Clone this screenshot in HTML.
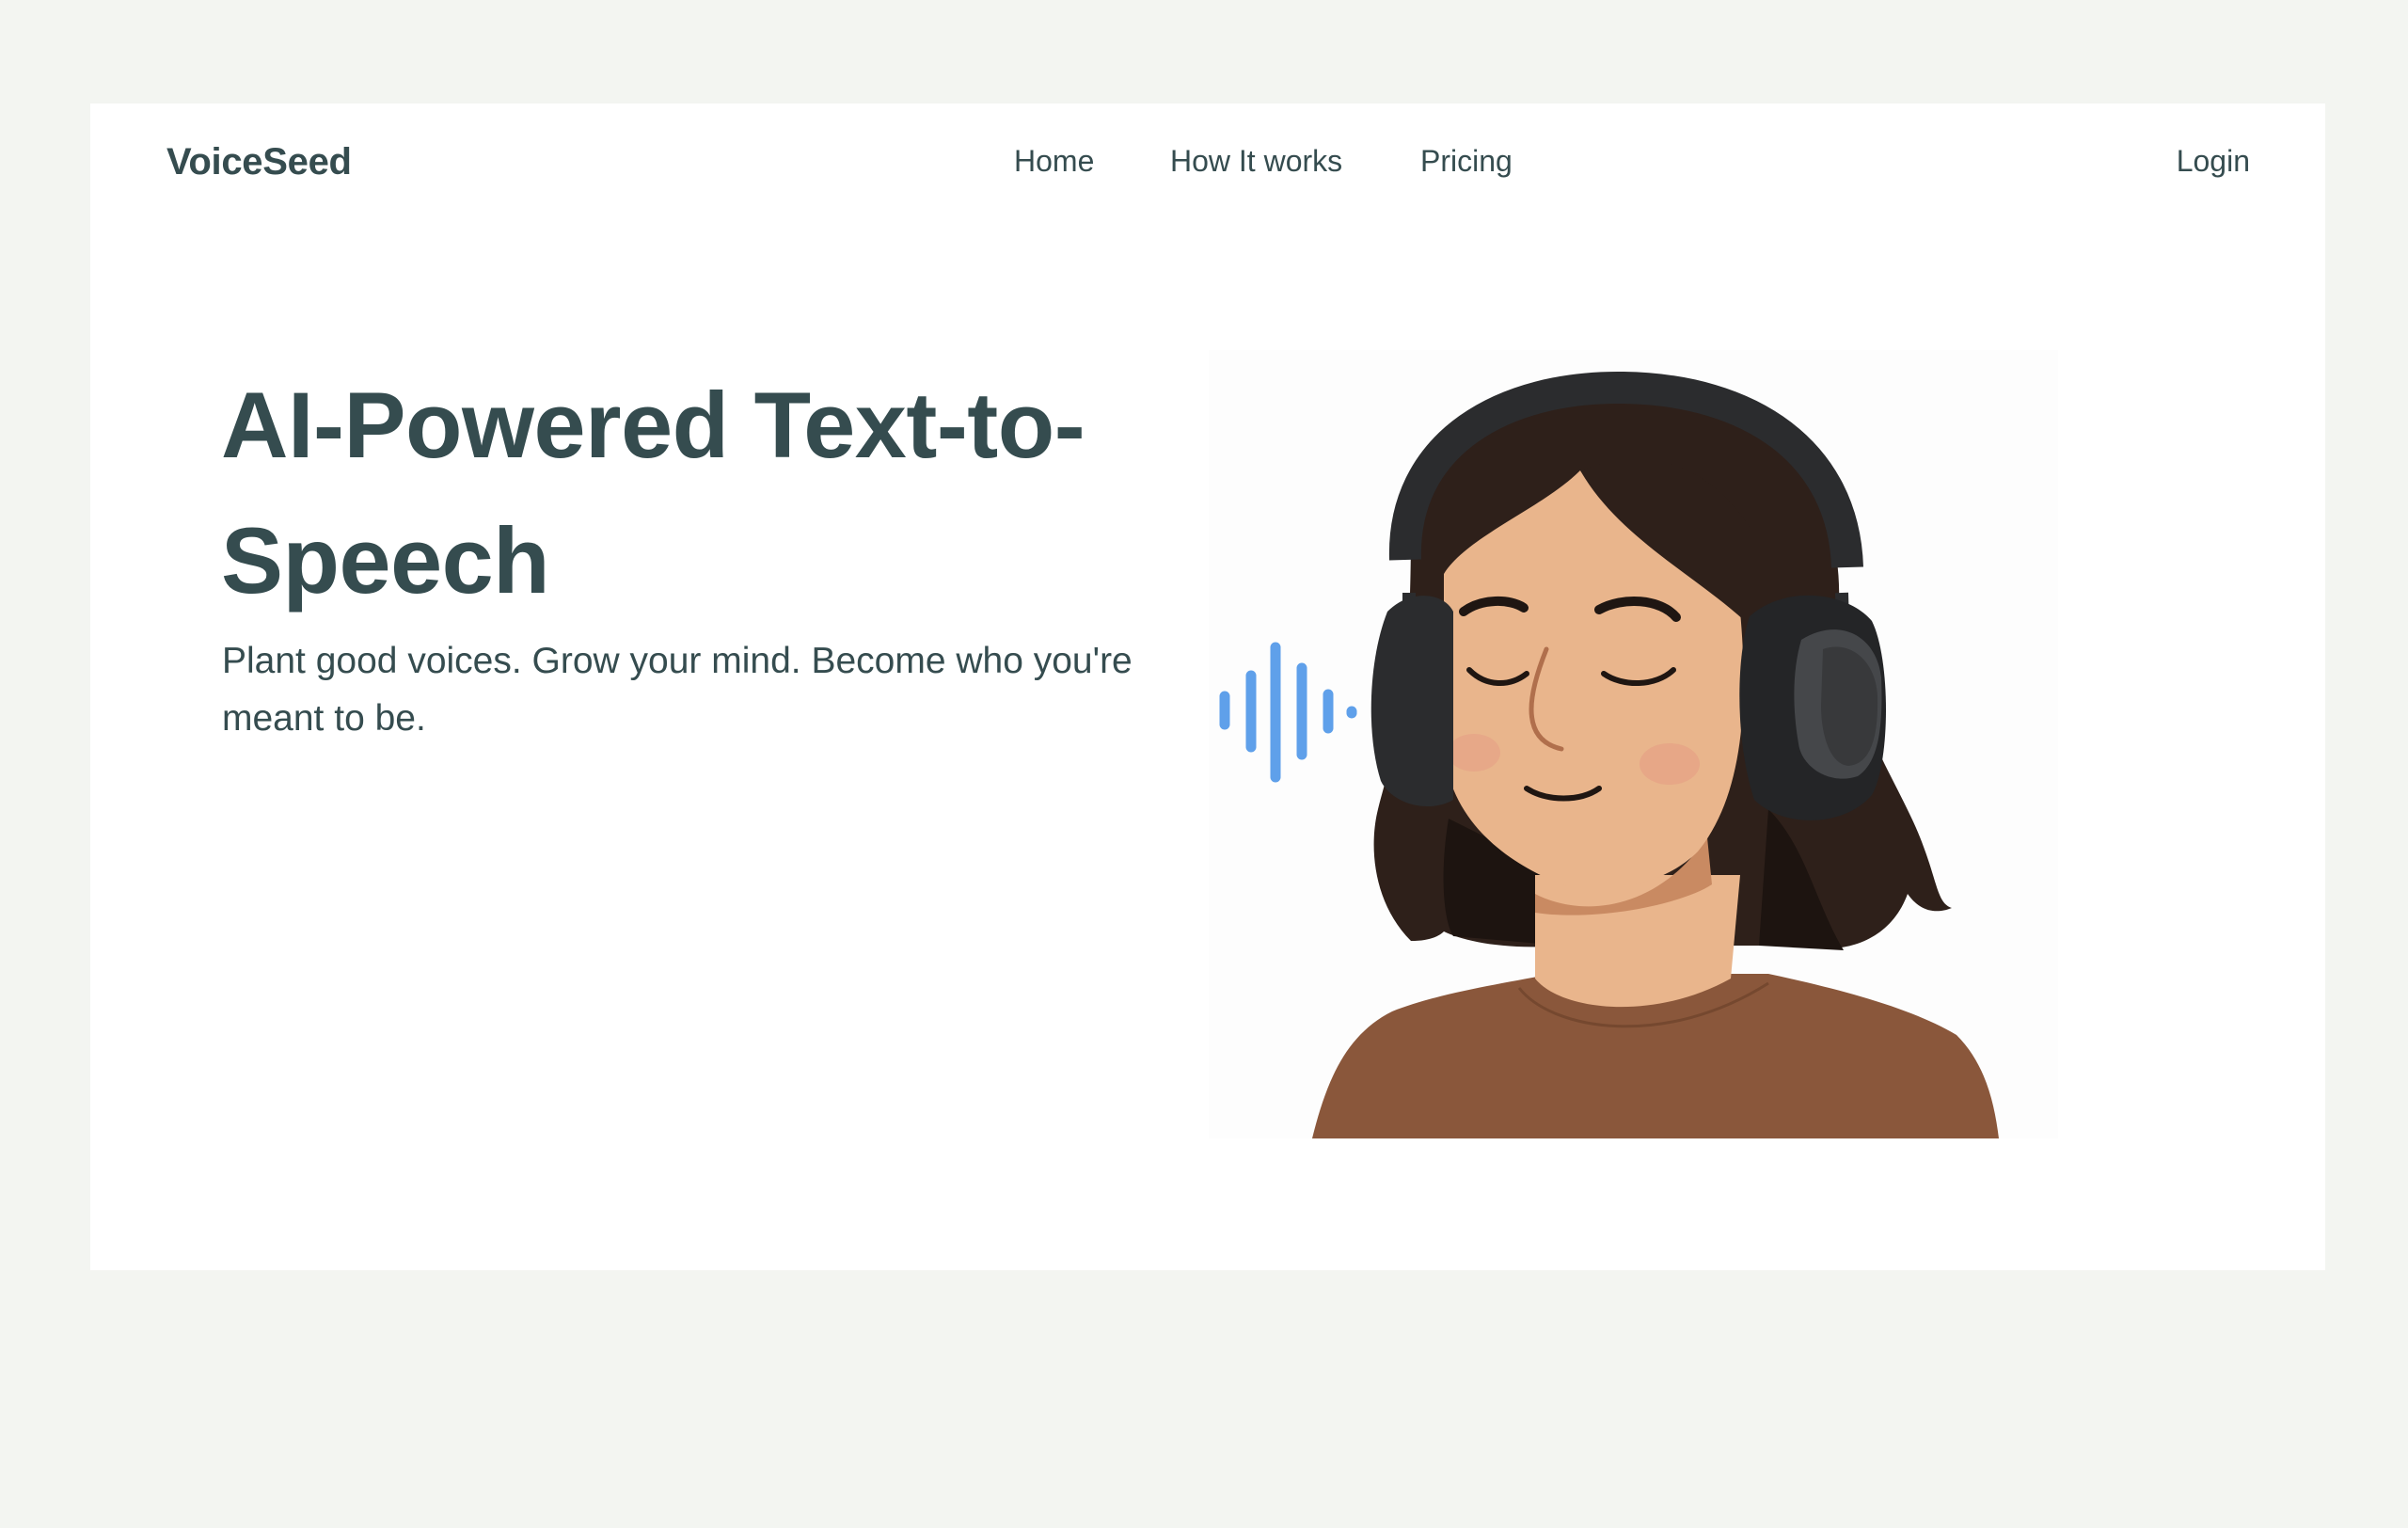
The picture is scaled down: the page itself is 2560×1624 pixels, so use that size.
<!DOCTYPE html>
<html><head><meta charset="utf-8"><style>
html,body{margin:0;padding:0;}
body{width:2560px;height:1624px;background:#f3f5f1;position:relative;overflow:hidden;font-family:"Liberation Sans",Arial,sans-serif;color:#354c4f;}
.card{position:absolute;left:96px;top:110px;width:2376px;height:1240px;background:#fff;}
.abs{position:absolute;white-space:nowrap;}
.logo{left:177px;top:148px;font-size:40px;line-height:48px;font-weight:bold;letter-spacing:-0.3px;}
.nav{top:151px;font-size:32px;line-height:40px;}
h1{position:absolute;left:235px;top:380px;margin:0;font-size:99px;line-height:144px;font-weight:bold;letter-spacing:-0.5px;}
.sub{left:236px;top:672px;font-size:39px;line-height:61px;}
</style></head><body>
<div class="card"></div>
<div class="abs logo">VoiceSeed</div>
<div class="abs nav" style="left:1078px">Home</div>
<div class="abs nav" style="left:1244px">How It works</div>
<div class="abs nav" style="left:1510px">Pricing</div>
<div class="abs nav" style="right:168px">Login</div>
<h1>AI-Powered Text-to-<br>Speech</h1>
<div class="abs sub">Plant good voices. Grow your mind. Become who you're<br>meant to be.</div>
<svg style="position:absolute;left:0;top:0" width="2560" height="1624" viewBox="0 0 2560 1624">
 <rect x="1285" y="372" width="903" height="838" fill="#fdfdfd"/>
 <g stroke="#5fa0ea" stroke-width="11" stroke-linecap="round">
  <line x1="1302" y1="740" x2="1302" y2="770"/>
  <line x1="1330" y1="718" x2="1330" y2="794"/>
  <line x1="1356" y1="688" x2="1356" y2="826"/>
  <line x1="1384" y1="710" x2="1384" y2="802"/>
  <line x1="1412" y1="738" x2="1412" y2="774"/>
  <line x1="1437" y1="756" x2="1437" y2="758"/>
 </g>
 <path d="M1500 560 C1500 460 1600 420 1725 425 C1860 430 1960 500 1955 640 C1960 760 2020 830 2045 900 C2060 940 2060 960 2075 965 C2050 975 2035 960 2028 950 C2010 1000 1960 1015 1920 1005 L1660 1005 C1600 1010 1555 1000 1535 990 C1530 995 1520 1000 1500 1000 C1460 960 1455 900 1465 860 C1480 800 1500 760 1500 560 Z" fill="#2e201a"/>
 <path d="M1540 870 C1530 930 1535 980 1545 995 L1660 1005 L1660 930 Z" fill="#1d1410"/>
 <path d="M1880 860 L1870 1005 L1960 1010 C1930 960 1920 900 1880 860 Z" fill="#1d1410"/>
 <path d="M1395 1210 C1410 1150 1430 1100 1480 1075 C1530 1055 1600 1045 1650 1035 L1880 1035 C1950 1050 2030 1070 2080 1100 C2110 1130 2120 1170 2125 1210 Z" fill="#8a573b"/>
 <path d="M1615 1050 C1650 1095 1770 1115 1880 1045" stroke="#75482f" stroke-width="3" fill="none"/>
 <path d="M1632 930 L1632 1040 C1660 1075 1760 1085 1840 1040 L1850 930 Z" fill="#e9b58c"/>
 <path d="M1632 950 C1680 975 1760 970 1815 890 L1820 940 C1790 960 1700 980 1632 970 Z" fill="#c98a62"/>
 <path d="M1535 610 C1560 570 1640 540 1680 500 C1720 560 1810 610 1850 650 C1860 760 1850 850 1805 905 C1765 945 1700 950 1660 940 C1610 920 1545 880 1535 800 Z" fill="#e9b58c"/>
 <path d="M1680 500 C1720 570 1800 610 1855 660 L1860 560 C1820 500 1760 470 1680 500 Z" fill="#2e201a"/>
 <ellipse cx="1567" cy="800" rx="28" ry="20" fill="#e59b83" opacity="0.5"/>
 <ellipse cx="1775" cy="812" rx="32" ry="22" fill="#e59b83" opacity="0.55"/>
 <g fill="none" stroke="#1f1612" stroke-linecap="round">
  <path d="M1556 650 C1575 636 1605 636 1620 646" stroke-width="10"/>
  <path d="M1700 648 C1725 634 1765 636 1782 656" stroke-width="10"/>
  <path d="M1562 712 C1580 730 1605 730 1623 716" stroke-width="6"/>
  <path d="M1705 716 C1725 730 1760 730 1779 712" stroke-width="6"/>
  <path d="M1623 838 C1645 852 1680 852 1700 838" stroke-width="6"/>
 </g>
 <path d="M1644 690 C1628 730 1612 785 1660 796" stroke="#b06f4c" stroke-width="5" fill="none" stroke-linecap="round"/>
 <path d="M1494 595 C1490 470 1600 410 1726 412 C1860 414 1960 480 1964 603" stroke="#2b2c2e" stroke-width="34" fill="none"/>
 <path d="M1498 630 L1498 700" stroke="#2b2c2e" stroke-width="14"/>
 <path d="M1958 630 L1960 700" stroke="#2b2c2e" stroke-width="14"/>
 <path d="M1475 650 C1500 625 1535 630 1545 650 L1545 850 C1520 865 1480 855 1468 830 C1452 780 1455 700 1475 650 Z" fill="#2b2c2e"/>
 <path d="M1860 655 C1900 620 1965 630 1990 660 C2010 700 2010 810 1990 845 C1960 880 1895 880 1865 850 C1845 790 1845 700 1860 655 Z" fill="#242527"/>
 <path d="M1915 680 C1955 655 1995 675 2000 720 C2002 770 1998 810 1975 825 C1945 835 1915 815 1912 790 C1905 750 1906 710 1915 680 Z" fill="#45474a"/>
 <path d="M1938 690 C1965 680 1994 700 1996 740 C1997 780 1990 812 1965 814 C1945 812 1936 780 1936 750 Z" fill="#38393b"/>
</svg>
</body></html>
